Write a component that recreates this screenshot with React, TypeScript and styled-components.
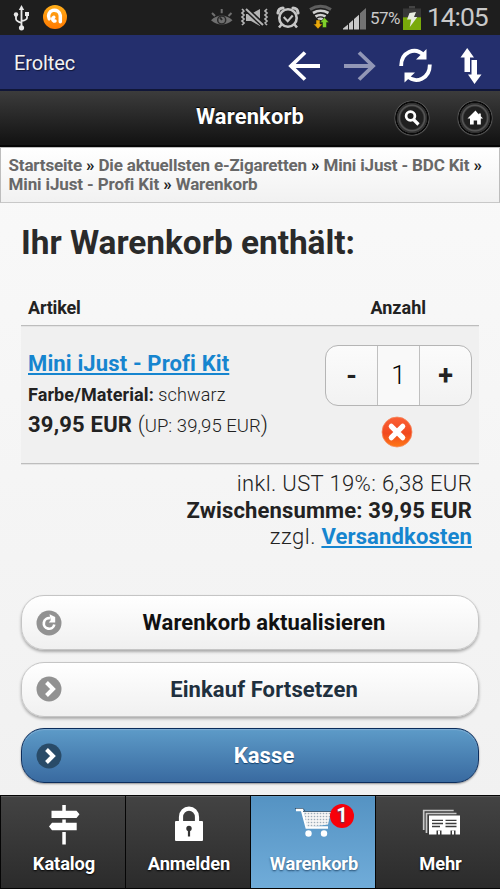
import React from "react";
import styled, { createGlobalStyle, css } from "styled-components";

const Global = createGlobalStyle`
  * { box-sizing: border-box; }
  html, body { margin: 0; padding: 0; }
  body { font-family: Roboto, "Liberation Sans", sans-serif; color: #222; }
  svg { display: block; flex: none; }
  a { color: inherit; }
  button { font: inherit; color: inherit; margin: 0; padding: 0; border: 0; background: none; }
`;

const Screen = styled.div`
  width: 500px;
  height: 889px;
  overflow: hidden;
  display: flex;
  flex-direction: column;
  background: linear-gradient(#f9f9f9 150px, #f1f1f1 800px);
`;

const StatusBar = styled.div`
  height: 35px;
  flex: none;
  display: flex;
  align-items: flex-start;
  background: #1e1e1e;
  color: #c9c9c9;
`;

const StatusRight = styled.div`
  margin-left: 143px;
  display: flex;
  align-items: flex-start;
`;

const Battery = styled.span`
  width: 32px;
  margin-left: 3px;
  font-size: 17px;
  line-height: 36px;
  letter-spacing: -0.6px;
  white-space: nowrap;
`;

const Clock = styled.span`
  margin-left: 6px;
  font-size: 26.5px;
  line-height: 34px;
  letter-spacing: -1.1px;
  white-space: nowrap;
`;

const AppBar = styled.div`
  height: 56px;
  flex: none;
  display: flex;
  align-items: center;
  padding: 0 18px 0 14px;
  background: #242f6d;
  border-bottom: 2px solid #101638;
`;

const AppName = styled.span`
  flex: 1;
  margin-top: 2px;
  font-size: 20px;
  letter-spacing: -0.1px;
  color: #f2f2f2;
  text-shadow: 1px 1px 1px #111739;
`;

const BrowserActions = styled.div`
  display: flex;
  align-items: center;
  gap: 23px;
  padding-top: 7px;
`;

const Header = styled.header`
  height: 56px;
  flex: none;
  display: grid;
  grid-template-columns: 130px 1fr 130px;
  background: linear-gradient(#3c3c3c, #141414 94%);
  border-bottom: 2px solid #050505;
`;

const Title = styled.h1`
  grid-column: 2;
  margin: 0;
  text-align: center;
  font-size: 21.8px;
  line-height: 51px;
  letter-spacing: 0.2px;
  font-weight: 700;
  color: #fff;
  text-shadow: 0 -1px 1px #000;
`;

const HeaderButtons = styled.div`
  display: flex;
  gap: 27px;
  padding: 8.5px 0 0 24px;
`;

const RoundButton = styled.button`
  width: 36px;
  height: 36px;
  flex: none;
  border-radius: 50%;
  display: flex;
  align-items: center;
  justify-content: center;
  background: radial-gradient(circle, #202020 0 11px, #555 12.5px 13px, #303030 14px 15px, #0a0a0a 15.5px 16.4px, #555 17px, #333 18px);
`;

const Breadcrumb = styled.nav`
  height: 56px;
  flex: none;
  padding: 8px 6px 0 7.5px;
  border: 1px solid #bdbdbd;
  border-bottom-color: #c8c8c8;
  background: linear-gradient(#fff, #f1f1f1);
  font-size: 17px;
  line-height: 19px;
  font-weight: 700;
  color: #686868;
  white-space: nowrap;
`;

const CrumbLine = styled.div<{ $spacing: number }>`
  letter-spacing: ${(p) => p.$spacing}px;
`;

const Sep = styled.span`
  color: #222;
`;

const Content = styled.main`
  flex: 1;
  min-height: 0;
  padding: 19px 21px 0;
`;

const Heading = styled.h2`
  margin: 0;
  height: 75px;
  font-size: 33.4px;
  line-height: 42px;
  font-weight: 700;
  letter-spacing: -0.02px;
  color: #2a2a2a;
  white-space: nowrap;
`;

const TableHead = styled.div`
  height: 29px;
  display: flex;
  justify-content: space-between;
  padding: 0 53px 0 7px;
  border-bottom: 1px solid #bdbdbd;
  font-size: 18px;
  line-height: 22px;
  font-weight: 700;
`;

const ColumnLabel = styled.span<{ $spacing?: number }>`
  letter-spacing: ${(p) => p.$spacing ?? 0}px;
`;

const CartRow = styled.div`
  height: 138px;
  display: flex;
  justify-content: space-between;
  padding: 19px 7px 0;
  background: #f0f0f0;
  border-bottom: 1px solid #bdbdbd;
  box-shadow: inset 0 1px #e4e4e4, 0 1px #e4e4e4;
`;

const linkStyle = css`
  color: #1685cf;
  font-weight: 700;
  letter-spacing: 0.14px;
  text-decoration: underline;
  text-decoration-thickness: 1.5px;
  text-underline-offset: 2px;
  text-decoration-skip-ink: none;
`;

const Article = styled.div`
  padding-top: 3px;
  white-space: nowrap;
`;

const ProductLink = styled.a`
  ${linkStyle}
  display: block;
  font-size: 22px;
  line-height: 32px;
`;

const Attribute = styled.div`
  font-size: 18px;
  line-height: 29px;
`;

const Price = styled.div`
  font-size: 22px;
  line-height: 32px;
`;

const UnitPrice = styled.span`
  font-size: 18.5px;
`;

const Light = styled.span<{ $spacing?: number }>`
  font-weight: 300;
  letter-spacing: ${(p) => p.$spacing ?? 0}px;
`;

const Strong = styled.strong<{ $spacing?: number }>`
  font-weight: 700;
  letter-spacing: ${(p) => p.$spacing ?? 0}px;
`;

const Quantity = styled.div`
  width: 147px;
  display: flex;
  flex-direction: column;
  align-items: center;
  gap: 10px;
  svg { margin-right: 3px; }
`;

const Stepper = styled.div`
  width: 147px;
  height: 61px;
  display: grid;
  grid-template-columns: 51px 43px 51px;
  border: 1px solid #b5b5b5;
  border-radius: 13px;
  background: linear-gradient(#fbfbfb, #f2f2f2);
  text-align: center;
  line-height: 58px;
`;

const StepButton = styled.button`
  font-size: 27px;
  font-weight: 700;
  line-height: 56px;
`;

const Amount = styled.div`
  border: solid #c0c0c0;
  border-width: 0 1px;
  background: #f9f9f9;
  font-size: 26px;
  font-weight: 300;
  color: #000;
`;

const Totals = styled.div`
  height: 131px;
  padding: 7px 7px 0;
  text-align: right;
  font-size: 22px;
  line-height: 26.5px;
`;

const ShippingLink = styled.a`
  ${linkStyle}
`;

const Actions = styled.div`
  display: flex;
  flex-direction: column;
  gap: 11.5px;
`;

const ActionButton = styled.button<{ $primary?: boolean; $ink?: string }>`
  height: 55px;
  flex: none;
  display: grid;
  grid-template-columns: 52px 1fr 24px;
  align-items: center;
  border: 1px solid #c5c5c5;
  border-radius: 23px;
  background: linear-gradient(#fff, #f0f0f0);
  box-shadow: 0 2px 3px rgba(0, 0, 0, 0.3);
  font-size: 22px;
  font-weight: 700;
  letter-spacing: 0.1px;
  color: ${(p) => p.$ink ?? "#111"};
  svg { margin-left: 14px; }
  ${(p) =>
    p.$primary &&
    css`
      border: 1.5px solid #0c2d5c;
      background: linear-gradient(#5d9bc8, #396aa0);
      box-shadow: inset 0 1px 1px #80afd4, 0 1px 2px rgba(0, 0, 0, 0.4);
      color: #fff;
      text-shadow: 0 1px 1px #16436f;
    `}
`;

const TabBar = styled.nav`
  height: 94px;
  flex: none;
  display: grid;
  grid-template-columns: 125px 125px 125px 125px;
  background: #050505;
`;

const Tab = styled.a<{ $active?: boolean; $shift?: number }>`
  margin: 1px 0 1px 1px;
  display: flex;
  flex-direction: column;
  align-items: center;
  padding: 6px 0 0 ${(p) => p.$shift ?? 2}px;
  border-top: 1px solid ${(p) => (p.$active ? "#659cc5" : "#5a5a5a")};
  background: ${(p) => (p.$active ? "linear-gradient(#5593c3, #70acd9)" : "linear-gradient(#434343, #2b2b2b)")};
  color: #fff;
  text-shadow: 0 1px 2px ${(p) => (p.$active ? "#244c70" : "#000")};
  font-size: 18.3px;
  line-height: 24px;
  font-weight: 700;
  letter-spacing: -0.1px;
  text-decoration: none;
`;

const TabIcon = styled.span`
  position: relative;
  height: 48.6px;
`;

const Badge = styled.span`
  position: absolute;
  left: 35px;
  top: 1px;
  width: 24px;
  height: 24px;
  border-radius: 50%;
  background: #f8000a;
  text-align: center;
  font-size: 20px;
  line-height: 23px;
`;

const UsbIcon = () => (
  <svg width="17" height="26" viewBox="0 0 17 26" fill="none" stroke="#e8e8e8" strokeWidth="1.8">
    <path d="M8.5 4v19M3 11v3q0 2 5.5 4M14 11v2q0 2-5.5 3" />
    <path d="M8.5 0 5.8 5h5.4z" fill="#e8e8e8" stroke="none" />
    <circle cx="8.5" cy="22.8" r="2.6" fill="#e8e8e8" stroke="none" />
    <circle cx="3" cy="9.5" r="2.2" fill="#e8e8e8" stroke="none" />
    <path d="M12 7h4v4h-4z" fill="#e8e8e8" stroke="none" />
  </svg>
);

const ShieldIcon = () => (
  <svg width="24" height="24" viewBox="0 0 24 24">
    <defs>
      <linearGradient id="orange" x2="0" y2="1">
        <stop stopColor="#ffae19" />
        <stop offset="1" stopColor="#ff7900" />
      </linearGradient>
    </defs>
    <circle cx="12" cy="12" r="12" fill="url(#orange)" />
    <path
      d="M6.2 13.8A5.9 5.9 0 1 1 17.3 10.5V16.8M12 15.9H10.8a2 2 0 0 1 0-3.6"
      fill="none"
      stroke="#fff"
      strokeWidth="3.5"
      strokeLinecap="round"
    />
  </svg>
);

const EyeIcon = () => (
  <svg width="24" height="18" viewBox="0 0 24 18" fill="none" stroke="#6f6f6f" strokeWidth="2">
    <path d="M1 11.2Q11.5 2 22.5 11.2Q11.5 20 1 11.2z" fill="#6f6f6f" stroke="none" />
    <circle cx="11.7" cy="11" r="4" fill="#6f6f6f" stroke="#292929" strokeWidth="1.5" />
    <path d="m10 8.5 2 2.5" stroke="#292929" />
    <path d="m2 4 3 3M11.7 0v4.2M21.5 4l-3 3" />
  </svg>
);

const MuteIcon = () => (
  <svg width="30" height="20" viewBox="0 0 30 20" fill="none" stroke="#b5b5b5" strokeWidth="1.7">
    <path d="m2 1 2 2-2 2 2 2-2 2 2 2-2 2 2 2-2 2M27 1l-2 2 2 2-2 2 2 2-2 2 2 2-2 2 2 2" />
    <path d="M6 6h5l9-5v17l-9-5H6z" fill="#b5b5b5" stroke="none" />
    <path d="m6 1 17 16" stroke="#1e1e1e" strokeWidth="5" />
    <path d="m6 1 17 16" strokeWidth="2" />
  </svg>
);

const AlarmIcon = () => (
  <svg width="24" height="24" viewBox="0 0 24 24" fill="none" stroke="#c6c6c6">
    <circle cx="12" cy="12" r="8.7" strokeWidth="2.6" />
    <path d="m7.7 11 4 4.2 5-5.7" strokeWidth="2.1" />
    <path d="M2 7a5 5 0 0 1 5-5M22 7a5 5 0 0 0-5-5" strokeWidth="3.2" strokeLinecap="round" />
    <path d="m6 18-3 3.5M18 18l3 3.5" strokeWidth="2.6" />
  </svg>
);

const WifiIcon = () => (
  <svg width="26" height="25" viewBox="0 0 26 25" fill="none" strokeWidth="3">
    <path d="M2 5.5Q12.5 -1 23 5.5" stroke="#5e5e5e" />
    <path d="M5 9Q12.5 4.5 20.5 9M7.5 12.5q5-3 10 0M10 15.5q2.5-1.5 5 0" stroke="#d0d0d0" strokeWidth="2.7" />
    <path d="M8 16h4v4h2.5L10 25l-4.5-5H8z" fill="#eaa90b" stroke="#2b220b" strokeWidth=".5" />
    <path d="M14.5 23.5v-5H12l4.5-5 4.5 5h-2.5v5z" fill="#7ed12b" stroke="#1b2b0b" strokeWidth=".5" />
  </svg>
);

const SignalIcon = () => (
  <svg width="24" height="24" viewBox="0 0 24 24" fill="#c8c8c8">
    <path d="M0 23.5V22.5L5 18.5V23.5zM6 23.5V17.5L10 14V23.5zM11 23.5V13L16 8.7V23.5z" />
    <path d="M17 23.5V7.2L23 2V23.5z" fill="#737373" />
  </svg>
);

const BatteryIcon = () => (
  <svg width="18" height="24" viewBox="0 0 18 24">
    <path d="M6 0h6v2.5H6z" fill="#444" />
    <path d="M0 2.5h18v9H0z" fill="#383838" />
    <path d="M0 11.3h18V24H0z" fill="#79aa0a" />
    <path d="m6.5 7 6.5-1-2 5h3.3L6.8 21l1.4-7.5H4z" fill="#e7ece0" />
  </svg>
);

const ArrowIcon = ({ forward = false }: { forward?: boolean }) => (
  <svg width="33" height="32" viewBox="0 0 33 32" fill="none" stroke={forward ? "#9297b6" : "#fff"} strokeWidth="3.8">
    <path d={forward ? "M1 16h29M16 2.5l14 13.5-14 13.5" : "M33 16H4M18 2.5 4 16l14 13.5"} />
  </svg>
);

const RefreshIcon = () => (
  <svg width="33" height="35" viewBox="0 0 33 35" fill="none" stroke="#fff" strokeWidth="3.8">
    <path d="M2.2 18C2 4 16-1.5 24.5 7M30.8 16.5C31 30.5 17 36.5 8.2 28" />
    <path d="M27.5 1v10.5H17zM5.5 34.5V24.5H16z" fill="#fff" stroke="none" />
  </svg>
);

const UpDownIcon = () => (
  <svg width="22" height="36" viewBox="0 0 22 36" fill="#fff">
    <path d="M7.2 0 14 9.5h-4V24H4.5V9.5H.5zM11.5 12H17v14.5h4.5L14.5 36 8 26.5h3.5z" />
  </svg>
);

const SearchIcon = () => (
  <svg width="16" height="16" viewBox="0 0 16 16" fill="none" stroke="#fff" strokeWidth="2.7">
    <circle cx="6.5" cy="6" r="4.4" />
    <path d="m9.5 9.5 5 5" strokeWidth="3.2" />
  </svg>
);

const HomeIcon = () => (
  <svg width="16" height="16" viewBox="0 0 16 16" fill="#fff">
    <path d="M8.5 .5 0.5 8.5H3v6h3.7v-4h3.4v4h3.7V8.5h2.2l-2.2-2.3V3.5h-2v1z" />
  </svg>
);

const RemoveIcon = () => (
  <svg width="32" height="32" viewBox="0 0 32 32">
    <defs>
      <linearGradient id="remove" x2="0" y2="1">
        <stop stopColor="#fb6035" />
        <stop offset=".55" stopColor="#f1491f" />
        <stop offset="1" stopColor="#ff7816" />
      </linearGradient>
    </defs>
    <circle cx="16" cy="16" r="15" fill="url(#remove)" stroke="#f58b61" strokeWidth=".8" />
    <path d="m10.3 10.3 11.4 11.4M21.7 10.3 10.3 21.7" stroke="#fff" strokeWidth="5.2" strokeLinecap="round" />
  </svg>
);

const ReloadDisc = () => (
  <svg width="26" height="26" viewBox="0 0 26 26" fill="none" stroke="#fff">
    <circle cx="13" cy="13" r="12.5" fill="#929292" stroke="none" />
    <path d="M14 8.2A5.3 5.3 0 1 0 18.3 14.5" strokeWidth="2.7" />
    <path d="M13.5 4.2 19.2 7v5.5h-6.5l2-2.3z" fill="#fff" stroke="none" />
  </svg>
);

const ChevronDisc = ({ disc = "#929292" }: { disc?: string }) => (
  <svg width="26" height="26" viewBox="0 0 26 26" fill="none">
    <circle cx="13" cy="13" r="12.5" fill={disc} />
    <path d="m10.5 6.5 6.5 6.5-6.5 6.5" stroke="#fff" strokeWidth="4" />
  </svg>
);

const SignpostIcon = () => (
  <svg width="32" height="42" viewBox="0 0 32 42" fill="#fff">
    <path d="M14.3 2H17.8v5.7h10.7l3 3.6-3 3.7H3.5V7.7h10.8zM14.3 16.5H17.8v3.3h10.9v7.4H4l-3-3.7 3-3.7h10.3zM14.3 29H17.8V41.5h-3.5z" />
  </svg>
);

const LockIcon = () => (
  <svg width="30" height="40" viewBox="0 0 30 40">
    <path d="M7 19v-5a8 8.4 0 0 1 16 0V19" fill="none" stroke="#fff" strokeWidth="4.2" />
    <rect x="1" y="18" width="28" height="20" rx="1" fill="#fff" />
    <circle cx="15" cy="25.5" r="2.7" fill="#333" />
    <path d="M13.9 25.5h2.2v8h-2.2z" fill="#333" />
  </svg>
);

const CartIcon = () => (
  <svg width="38" height="38" viewBox="0 0 38 38">
    <defs>
      <pattern id="mesh" width="3" height="3" patternUnits="userSpaceOnUse">
        <rect width="3" height="3" fill="#f4f4f4" />
        <circle cx="1.5" cy="1.5" r=".8" fill="#9eacb8" />
      </pattern>
    </defs>
    <path d="M0 5.5h8L10 8" fill="none" stroke="#38546d" />
    <path d="M1 7h6l4.7 17.5H33" fill="none" stroke="#fff" strokeWidth="2.6" />
    <path d="M9 9h27l-3 12.5-21 3z" fill="url(#mesh)" />
    <path d="M8 8.5h28" stroke="#45647e" />
    <circle cx="13.5" cy="30.5" r="3.2" fill="#fff" />
    <circle cx="29" cy="30.5" r="3.2" fill="#fff" />
  </svg>
);

const CardsIcon = () => (
  <svg width="38" height="38" viewBox="0 0 38 38">
    <path d="M1.7 27V7.5h30M4.5 30V10.5h30" fill="none" stroke="#c8c8c8" strokeWidth="1.7" />
    <path d="M7 12.5h31v19h-4.5V27.5h-5v4h-9v-4h-5v4H7z" fill="#fff" />
    <path d="M10 17.3h11M10 20.5h11M10 23.5h8M23.5 17.3h11M23.5 20.5h11M23.5 23.5h11" stroke="#3c3c3c" strokeWidth="1.3" />
    <path d="M16 27.5h2v4h-2zM30 27.5h2v4h-2z" fill="#fff" />
  </svg>
);

const Shift = styled.span<{ $x: number; $y: number }>`
  display: block;
  padding: ${(p) => p.$y}px 0 0 ${(p) => p.$x}px;
`;

export default function App() {
  return (
    <Screen>
      <Global />
      <StatusBar>
        <Shift $x={13} $y={5}><UsbIcon /></Shift>
        <Shift $x={13} $y={5}><ShieldIcon /></Shift>
        <StatusRight>
          <Shift $x={0} $y={9}><EyeIcon /></Shift>
          <Shift $x={6} $y={8}><MuteIcon /></Shift>
          <Shift $x={6} $y={6}><AlarmIcon /></Shift>
          <Shift $x={8} $y={4}><WifiIcon /></Shift>
          <Shift $x={9} $y={6}><SignalIcon /></Shift>
          <Battery>57%</Battery>
          <Shift $x={1} $y={6}><BatteryIcon /></Shift>
          <Clock>14:05</Clock>
        </StatusRight>
      </StatusBar>
      <AppBar>
        <AppName>Eroltec</AppName>
        <BrowserActions>
          <ArrowIcon />
          <ArrowIcon forward />
          <RefreshIcon />
          <Shift $x={5} $y={0}><UpDownIcon /></Shift>
        </BrowserActions>
      </AppBar>
      <Header>
        <Title>Warenkorb</Title>
        <HeaderButtons>
          <RoundButton aria-label="Suche"><SearchIcon /></RoundButton>
          <RoundButton aria-label="Startseite"><HomeIcon /></RoundButton>
        </HeaderButtons>
      </Header>
      <Breadcrumb>
        <CrumbLine $spacing={-0.16}>
          Startseite <Sep>»</Sep> Die aktuellsten e-Zigaretten <Sep>»</Sep> Mini iJust - BDC Kit <Sep>»</Sep>
        </CrumbLine>
        <CrumbLine $spacing={-0.12}>
          Mini iJust - Profi Kit <Sep>»</Sep> Warenkorb
        </CrumbLine>
      </Breadcrumb>
      <Content>
        <Heading>Ihr Warenkorb enthält:</Heading>
        <TableHead>
          <ColumnLabel $spacing={-0.2}>Artikel</ColumnLabel>
          <ColumnLabel>Anzahl</ColumnLabel>
        </TableHead>
        <CartRow>
          <Article>
            <ProductLink>Mini iJust - Profi Kit</ProductLink>
            <Attribute><Strong $spacing={0.1}>Farbe/Material:</Strong> <Light $spacing={0.15}>schwarz</Light></Attribute>
            <Price><Strong $spacing={0.2}>39,95 EUR</Strong> <Light $spacing={0.05}>(<UnitPrice>UP: 39,95 EUR</UnitPrice>)</Light></Price>
          </Article>
          <Quantity>
            <Stepper>
              <StepButton>-</StepButton>
              <Amount>1</Amount>
              <StepButton>+</StepButton>
            </Stepper>
            <RemoveIcon />
          </Quantity>
        </CartRow>
        <Totals>
          <div><Light $spacing={0.37}>inkl. UST 19%: 6,38 EUR</Light></div>
          <div><Strong $spacing={0.15}>Zwischensumme: 39,95 EUR</Strong></div>
          <div><Light $spacing={0.5}>zzgl.</Light> <ShippingLink>Versandkosten</ShippingLink></div>
        </Totals>
        <Actions>
          <ActionButton><ReloadDisc /><span>Warenkorb aktualisieren</span></ActionButton>
          <ActionButton $ink="#1f303e"><ChevronDisc /><span>Einkauf Fortsetzen</span></ActionButton>
          <ActionButton $primary><ChevronDisc disc="#294b68" /><span>Kasse</span></ActionButton>
        </Actions>
      </Content>
      <TabBar>
        <Tab><TabIcon><SignpostIcon /></TabIcon>Katalog</Tab>
        <Tab><TabIcon><LockIcon /></TabIcon>Anmelden</Tab>
        <Tab $active><TabIcon><CartIcon /><Badge>1</Badge></TabIcon>Warenkorb</Tab>
        <Tab $shift={5}><TabIcon><CardsIcon /></TabIcon>Mehr</Tab>
      </TabBar>
    </Screen>
  );
}
